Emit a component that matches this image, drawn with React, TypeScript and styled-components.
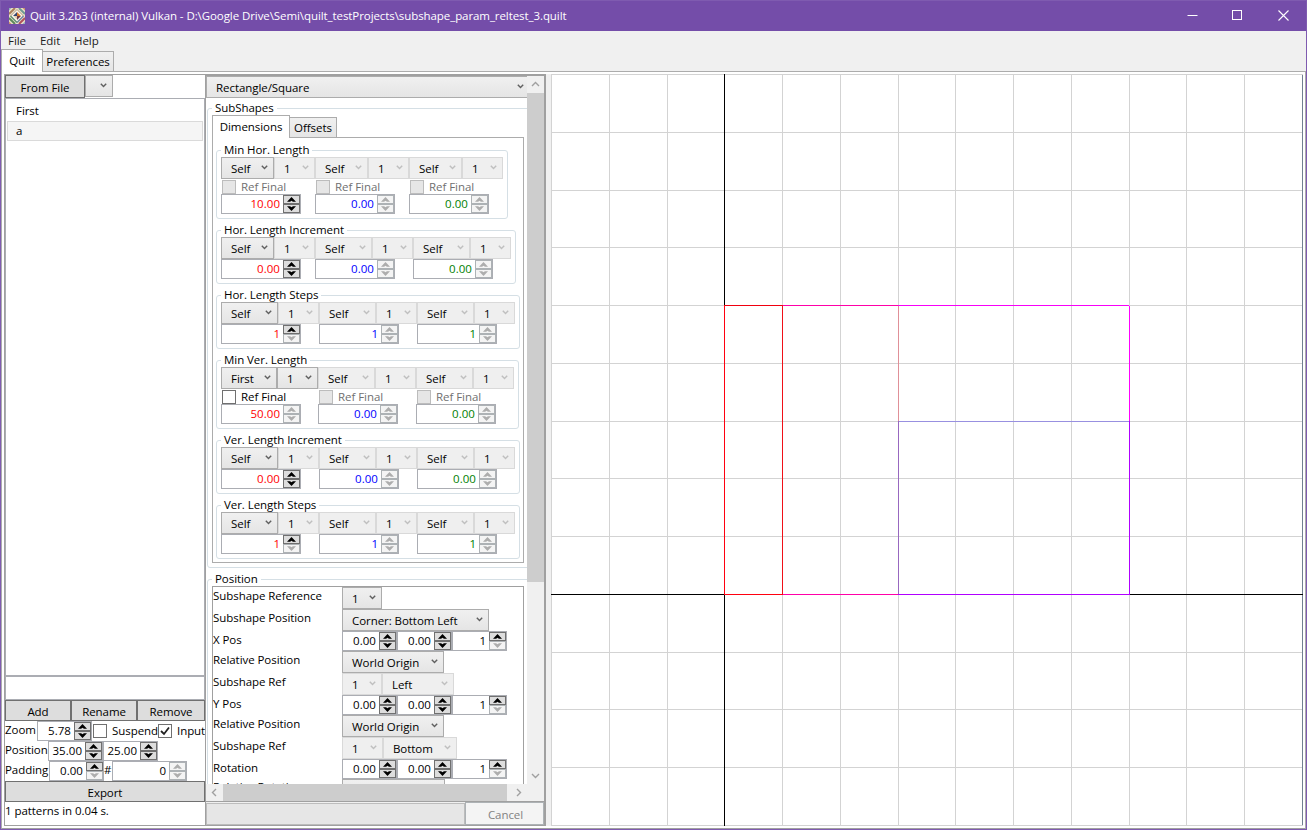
import React from "react";
import styled, { createGlobalStyle, css } from "styled-components";

const Global = createGlobalStyle`
  * { box-sizing: border-box; }
  html, body { margin: 0; padding: 0; overflow: hidden; }
  body { font: 11.5px/16px "Open Sans", "Noto Sans", sans-serif; letter-spacing: -0.06px; color: #000; }
`;

const Window = styled.div`
  width: 1307px; height: 830px; display: flex; flex-direction: column;
  background: #f0f0f0; border: 1px solid #7f5bb0; overflow: hidden; white-space: nowrap;
`;
const TitleBar = styled.header`
  height: 30px; flex: none; background: #744da9; color: #fff; display: flex; align-items: center; padding-left: 8px;
`;
const Title = styled.span` margin-left: 5px; flex: 1; letter-spacing: -0.08px; `;
const WindowButton = styled.span`
  width: 45.5px; height: 30px; display: flex; align-items: center; justify-content: center; position: relative; top: -1px;
`;
const MenuBar = styled.nav` height: 18px; flex: none; display: flex; padding: 2px 0 0 7px; color: #212121; `;
const MenuItem = styled.span<{ $w: number }>` width: ${p => p.$w}px; `;

const TabStrip = styled.div` display: flex; align-items: flex-end; height: 23px; flex: none; `;
const Tab = styled.div<{ $w: number; $active?: boolean }>`
  width: ${p => p.$w}px; border: 1px solid #acacac; border-bottom: 0; flex: none;
  display: flex; justify-content: center; align-items: center; position: relative;
  ${p => p.$active
    ? css`height: 23px; background: #fff; padding-bottom: 1px; z-index: 1;`
    : css`height: 20px; background: linear-gradient(#f0f0f0, #e5e5e5); margin: 0 0 1px -1px;`}
`;
const Page = styled.main`
  flex: 1; min-height: 0; margin-top: -1px; border: 1px solid #acacac; border-bottom-color: #a0a0a0; background: #fff;
  display: flex; padding: 2px;
`;

const LeftColumn = styled.aside`
  width: 201px; flex: none; display: flex; flex-direction: column;
  border: 1px solid #a0a0a0; border-right: 0;
`;
const Row = styled.div<{ $h?: number }>` display: flex; flex: none; ${p => p.$h && css`height: ${p.$h}px;`} `;
const Button = styled.div<{ $w?: number; $h?: number; $disabled?: boolean }>`
  ${p => (p.$w ? css`width: ${p.$w}px; flex: none;` : css`flex: 1;`)}
  height: ${p => p.$h ?? 21}px; background: #ddd; border: 1px solid #707070; padding-top: 2px;
  display: flex; align-items: center; justify-content: center;
  ${p => p.$disabled && css`background: #f4f4f4; border-color: #adb2b5; color: #838383; padding-left: 2px;`}
`;
const ListBox = styled.div` height: 578px; flex: none; border: 1px solid #abadb3; padding: 2px 1px; `;
const ListItem = styled.div<{ $selected?: boolean }>`
  height: 20px; padding: 0 8px; line-height: 18px; border: 1px solid transparent;
  ${p => p.$selected && css`background: #f5f5f5; border-color: #dadada;`}
`;
const NameBox = styled.div` height: 24px; flex: none; border: 1px solid #abadb3; `;
const Label = styled.span<{ $w: number; $tight?: boolean }>`
  width: ${p => p.$w}px; flex: none; line-height: ${p => (p.$tight ? 16 : 18)}px;
`;
const Status = styled.div` padding-top: 1px; `;

const ComboBox = styled.div<{ $w: number; $disabled?: boolean }>`
  width: ${p => p.$w}px; height: 22px; flex: none; display: flex; justify-content: space-between;
  border: 1px solid #acacac; background: linear-gradient(#f0f0f0, #e5e5e5); padding: 3px 5px 0 9px; line-height: 15px;
  ${p => p.$disabled && css`border-color: #d9d9d9; background: #efefef;`}
`;
const Chevron = styled.svg` width: 7px; height: 5px; margin-top: 4px; flex: none; margin-left: auto; `;

function Combo({ text, w, off }: { text?: string; w: number; off?: boolean }) {
  return (
    <ComboBox $w={w} $disabled={off}>
      <span>{text}</span>
      <Chevron viewBox="0 0 7 5">
        <path d="M0.8 0.8L3.5 3.6L6.2 0.8" fill="none" stroke={off ? "#bfbfbf" : "#606060"} strokeWidth="1.4" />
      </Chevron>
    </ComboBox>
  );
}

const SpinField = styled.div<{ $w: number; $color?: string }>`
  width: ${p => p.$w}px; height: 20px; flex: none; border: 1px solid #abadb3; background: #fff;
  display: flex; color: ${p => p.$color ?? "#000"};
  & > span { flex: 1; text-align: right; padding-right: 3px; line-height: 18px; letter-spacing: 0.04px; }
`;
const SpinButtons = styled.div` width: 17px; flex: none; `;
const SpinButton = styled.div<{ $off?: boolean }>`
  height: 9px; display: flex; align-items: center; justify-content: center;
  background: ${p => (p.$off ? "#f4f4f4" : "#ddd")}; border: 1px solid ${p => (p.$off ? "#adb2b5" : "#707070")};
`;

function Arrow({ down, off }: { down?: boolean; off?: boolean }) {
  return (
    <svg width="9" height="5" viewBox="0 0 9 5">
      <path
        d={down ? "M0 0.2H3.1L4.5 1.2L5.9 0.2H9L4.5 4.9Z" : "M0 4.8H3.1L4.5 3.8L5.9 4.8H9L4.5 0.1Z"}
        fill={off ? "#adadad" : "#000"}
      />
    </svg>
  );
}

function Spin({ value, w, color, up = true, down = true }: { value: string; w: number; color?: string; up?: boolean; down?: boolean }) {
  return (
    <SpinField $w={w} $color={color}>
      <span>{value}</span>
      <SpinButtons>
        <SpinButton $off={!up}><Arrow off={!up} /></SpinButton>
        <SpinButton $off={!down}><Arrow down off={!down} /></SpinButton>
      </SpinButtons>
    </SpinField>
  );
}

const Box = styled.span<{ $off?: boolean }>`
  width: 14px; height: 14px; flex: none; border: 1px solid ${p => (p.$off ? "#bcbcbc" : "#707070")};
  background: ${p => (p.$off ? "#e6e6e6" : "#fff")}; display: flex; align-items: center; justify-content: center;
`;
const CheckLabel = styled.label<{ $off?: boolean; $w?: number; $h?: number }>`
  display: flex; align-items: center; gap: 5px; height: ${p => p.$h ?? 15}px; padding-left: 1px;
  color: ${p => (p.$off ? "#707070" : "#000")}; ${p => p.$w && css`width: ${p.$w}px;`}
`;

const Middle = styled.section`
  width: 341px; flex: none; border: 1px solid #a0a0a0; border-width: 2px 2px 1px 1px; display: flex; flex-direction: column;
  background: #f0f0f0;
`;
const ScrollArea = styled.div` display: flex; height: 708px; flex: none; `;
const Viewport = styled.div` width: 321px; flex: none; overflow: hidden; background: #fff; `;
const ScrollContent = styled.div` width: 330px; padding-right: 6px; `;
const VBar = styled.div` width: 17px; flex: none; display: flex; flex-direction: column; background: #f0f0f0; `;
const HBar = styled.div` height: 17px; flex: none; display: flex; width: 321px; `;
const ArrowCell = styled.div` width: 17px; height: 17px; flex: none; display: flex; align-items: center; justify-content: center; `;
const Thumb = styled.div<{ $len: number; $vertical?: boolean }>`
  background: #cdcdcd; flex: none;
  ${p => (p.$vertical ? css`height: ${p.$len}px;` : css`width: ${p.$len}px; margin-right: 3px;`)}
`;
const Spacer = styled.div` flex: 1; `;
const BottomBar = styled.div` display: flex; border-top: 1px solid #a0a0a0; flex: 1; `;
const Progress = styled.div` width: 259px; border: 1px solid #bcbcbc; background: #e6e6e6; margin-top: 1px; `;

function ScrollArrow({ d }: { d: string }) {
  return <svg width="9" height="9" viewBox="0 0 9 9"><path d={d} fill="none" stroke="#a0a0a0" strokeWidth="1.4" /></svg>;
}

const Group = styled.div<{ $w?: number; $h?: number; $mt?: number }>`
  border: 1px solid #d5dfe5; border-radius: 3px; padding: 0 4px;
  margin: ${p => p.$mt ?? 0}px 0 11px; flex: none;
  ${p => p.$w && css`width: ${p.$w}px;`} ${p => p.$h && css`height: ${p.$h}px;`}
`;
const Legend = styled.div`
  width: fit-content; height: 14px; margin-top: -8px; padding: 0 3px; background: #fff; line-height: 13px;
`;
const TabPage = styled.div` width: 312px; height: 426px; border: 1px solid #acacac; margin-top: -1px; padding: 12px 0 0 3px; `;

type ColumnDef = [number, number];
type LengthGroup = { title: string; w: number; cols: ColumnDef[]; values: string[]; first?: string; check?: boolean; linked?: boolean };
const wide: ColumnDef[] = [[57, 41], [57, 41], [57, 41]];
const groups: LengthGroup[] = [
  { title: "Min Hor. Length", w: 292, cols: [[53, 41], [53, 41], [53, 41]], values: ["10.00", "0.00", "0.00"], check: true },
  { title: "Hor. Length Increment", w: 300, cols: [[53, 41], [57, 41], [57, 41]], values: ["0.00", "0.00", "0.00"] },
  { title: "Hor. Length Steps", w: 304, cols: wide, values: ["1", "1", "1"] },
  { title: "Min Ver. Length", w: 303, cols: [[56, 41], [57, 41], [57, 41]], values: ["50.00", "0.00", "0.00"], first: "First", check: true, linked: true },
  { title: "Ver. Length Increment", w: 304, cols: wide, values: ["0.00", "0.00", "0.00"] },
  { title: "Ver. Length Steps", w: 304, cols: wide, values: ["1", "1", "1"] },
];
const valueColors = ["#ff0000", "#0000ff", "#008000"];

function LengthBox({ g }: { g: LengthGroup }) {
  return (
    <Group $w={g.w} $h={g.check ? 69 : 54}>
      <Legend>{g.title}</Legend>
      <Row>
        {g.cols.map(([a, b], i) => {
          const active = i === 0;
          const linked = active && g.linked;
          const spinning = active && !g.linked;
          return (
            <div key={i}>
              <Row>
                <Combo w={a} text={active && g.first ? g.first : "Self"} off={!active} />
                <Combo w={b} text="1" off={!linked} />
              </Row>
              {g.check && (
                <CheckLabel $off={!linked}>
                  <Box $off={!linked} />Ref Final
                </CheckLabel>
              )}
              <Spin w={80} value={g.values[i]} color={valueColors[i]} up={spinning} down={spinning && g.values[i].includes(".")} />
            </div>
          );
        })}
      </Row>
    </Group>
  );
}

const OuterGroup = styled(Group)` width: 324px; margin-left: 1px; `;
const PositionBox = styled.div` width: 312px; border: 1px solid #a0a0a0; height: 260px; `;
const PositionRow = styled.div<{ $h: number }>` display: flex; height: ${p => p.$h}px; `;

function PosRow({ label, spin, tight, children }: { label: string; spin?: boolean; tight?: boolean; children?: React.ReactNode }) {
  return (
    <PositionRow $h={spin ? 20 : 22}>
      <Label $w={129} $tight={tight}>{label}</Label>
      {spin ? (
        <>
          <Spin w={55} value="0.00" />
          <Spin w={55} value="0.00" />
          <Spin w={55} value="1" down={false} />
        </>
      ) : children}
    </PositionRow>
  );
}

function SubShapes() {
  return (
    <OuterGroup $mt={10} $h={460}>
      <Legend>SubShapes</Legend>
      <TabStrip>
        <Tab $w={78} $active>Dimensions</Tab>
        <Tab $w={48}>Offsets</Tab>
      </TabStrip>
      <TabPage>
        {groups.map(g => <LengthBox key={g.title} g={g} />)}
      </TabPage>
    </OuterGroup>
  );
}

function Position() {
  return (
    <OuterGroup>
      <Legend>Position</Legend>
      <PositionBox>
        <PosRow label="Subshape Reference"><Combo w={40} text="1" /></PosRow>
        <PosRow label="Subshape Position"><Combo w={147} text="Corner: Bottom Left" /></PosRow>
        <PosRow label="X Pos" spin />
        <PosRow label="Relative Position"><Combo w={102} text="World Origin" /></PosRow>
        <PosRow label="Subshape Ref"><Combo w={40} text="1" off /><Combo w={72} text="Left" off /></PosRow>
        <PosRow label="Y Pos" spin />
        <PosRow label="Relative Position"><Combo w={102} text="World Origin" /></PosRow>
        <PosRow label="Subshape Ref"><Combo w={41} text="1" off /><Combo w={74} text="Bottom" off /></PosRow>
        <PosRow label="Rotation" spin />
        <PosRow label="Relative Rotation" tight><Combo w={103} /></PosRow>
      </PositionBox>
    </OuterGroup>
  );
}

const Splitter = styled.div` width: 5px; flex: none; background: #f0f0f0; `;
const Canvas = styled.svg` width: 752px; height: 752px; flex: none; display: block; `;

const gridX = [0, 58, 116, 173, 231, 289, 347, 404, 462, 520, 578, 635, 693];
const gridY = [0, 58, 116, 173, 231, 289, 347, 404, 462, 520, 578, 635, 693, 751];
const segments: [number, number, number, number, string][] = [
  [0, 520, 752, 1, "#000"],
  [173, 0, 1, 752, "#000"],
  [173, 231, 58, 1, "#f00010"],
  [231, 231, 116, 1, "#ff00a8"],
  [347, 231, 231, 1, "#f800f8"],
  [231, 231, 1, 290, "#f01018"],
  [347, 232, 1, 115, "#e09098"],
  [347, 347, 231, 1, "#9890e0"],
  [347, 347, 1, 173, "#9868c0"],
  [578, 232, 1, 115, "#ff00ff"],
  [578, 347, 1, 173, "#b000ff"],
  [173, 520, 59, 1, "#ff0010"],
  [232, 520, 115, 1, "#ff00a8"],
  [347, 520, 232, 1, "#b000ff"],
  [173, 231, 1, 289, "#ff0010"],
];

function Drawing() {
  return (
    <Canvas viewBox="0 0 752 752" shapeRendering="crispEdges">
      {gridX.map(x => <rect key={"x" + x} x={x} y={0} width={1} height={752} fill="#d3d3d3" />)}
      {gridY.map(y => <rect key={"y" + y} x={0} y={y} width={752} height={1} fill="#d3d3d3" />)}
      <rect x={751} y={1} width={1} height={750} fill="#708090" />
      {segments.map(([x, y, w, h, c], i) => <rect key={i} x={x} y={y} width={w} height={h} fill={c} />)}
    </Canvas>
  );
}

function Logo() {
  return (
    <svg width="16" height="16" viewBox="0 0 16 16">
      <rect width="16" height="16" fill="#e9dfcb" />
      <path d="M0 6L6 0" stroke="#a9805a" strokeWidth="2" />
      <path d="M10 0L16 6" stroke="#6f9a92" strokeWidth="2" />
      <path d="M0 10L6 16" stroke="#5d8a5c" strokeWidth="2" />
      <path d="M10 16L16 10" stroke="#b0525a" strokeWidth="2" />
      <path d="M0 0H2.5L0 2.5ZM16 16H13.5L16 13.5Z" fill="#8fb0b8" />
      <path d="M16 0V2.5L13.5 0ZM0 16V13.5L2.5 16Z" fill="#c98f6a" />
      <path d="M8 2L14 8L8 14L2 8Z" fill="#fbf6ee" />
      <path d="M1.5 8L8 14.5" stroke="#5f9070" strokeWidth="1.4" />
      <path d="M14.5 8L8 14.5" stroke="#6e83a2" strokeWidth="1.4" />
      <path d="M1.5 8L8 1.5L14.5 8" fill="none" stroke="#b7a083" strokeWidth="1" />
      <path d="M8 4L12 8H8Z" fill="#d97a2b" />
      <path d="M8 4V8H4Z" fill="#38466d" />
      <path d="M4.5 8H8V11.5Z" fill="#e0cdb0" />
      <path d="M8 8H12L8 12Z" fill="#713b48" />
    </svg>
  );
}

export default function App() {
  return (
    <Window>
      <Global />
      <TitleBar>
        <Logo />
        <Title>Quilt 3.2b3 (internal) Vulkan - D:\Google Drive\Semi\quilt_testProjects\subshape_param_reltest_3.quilt</Title>
        <WindowButton><svg width="11" height="11"><path d="M0.5 5.5H10.5" stroke="#fff" /></svg></WindowButton>
        <WindowButton><svg width="11" height="11"><rect x="0.5" y="0.5" width="9" height="9" fill="none" stroke="#fff" /></svg></WindowButton>
        <WindowButton><svg width="11" height="11"><path d="M0.5 0.5L10.5 10.5M10.5 0.5L0.5 10.5" stroke="#fff" strokeWidth="1.1" /></svg></WindowButton>
      </TitleBar>
      <MenuBar>
        <MenuItem $w={32}>File</MenuItem><MenuItem $w={34}>Edit</MenuItem><MenuItem $w={30}>Help</MenuItem>
      </MenuBar>
      <TabStrip>
        <Tab $w={42} $active>Quilt</Tab>
        <Tab $w={72}>Preferences</Tab>
      </TabStrip>
      <Page>
        <LeftColumn>
          <Row $h={23}>
            <Button $w={80} $h={23}>From File</Button>
            <Combo w={28} />
          </Row>
          <ListBox>
            <ListItem>First</ListItem>
            <ListItem $selected>a</ListItem>
          </ListBox>
          <NameBox />
          <Row>
            <Button $w={66}>Add</Button><Button $w={66}>Rename</Button><Button>Remove</Button>
          </Row>
          <Row $h={20}>
            <Label $w={32}>Zoom</Label><Spin w={55} value="5.78" />
            <CheckLabel $h={20} $w={65}><Box />Suspend</CheckLabel>
            <CheckLabel $h={20}>
              <Box><svg width="10" height="10" viewBox="0 0 10 10"><path d="M1 5L4 8L9 1.5" fill="none" stroke="#212121" strokeWidth="1.8" /></svg></Box>Input
            </CheckLabel>
          </Row>
          <Row $h={20}>
            <Label $w={43}>Position</Label><Spin w={55} value="35.00" /><Spin w={55} value="25.00" />
          </Row>
          <Row $h={20}>
            <Label $w={44}>Padding</Label><Spin w={55} value="0.00" down={false} />
            <Label $w={8}>#</Label><Spin w={75} value="0" up={false} down={false} />
          </Row>
          <Row><Button>Export</Button></Row>
          <Status>1 patterns in 0.04 s.</Status>
        </LeftColumn>
        <Middle>
          <ScrollArea>
            <Viewport>
              <ScrollContent>
                <Combo w={324} text="Rectangle/Square" />
                <SubShapes />
                <Position />
              </ScrollContent>
            </Viewport>
            <VBar>
              <ArrowCell><ScrollArrow d="M1 6L4.5 2.5L8 6" /></ArrowCell>
              <Thumb $vertical $len={489} />
              <Spacer />
              <ArrowCell><ScrollArrow d="M1 3L4.5 6.5L8 3" /></ArrowCell>
            </VBar>
          </ScrollArea>
          <HBar>
            <ArrowCell><ScrollArrow d="M6 1L2.5 4.5L6 8" /></ArrowCell>
            <Thumb $len={284} />
            <ArrowCell><ScrollArrow d="M3 1L6.5 4.5L3 8" /></ArrowCell>
          </HBar>
          <BottomBar>
            <Progress />
            <Button $disabled $h={23}>Cancel</Button>
          </BottomBar>
        </Middle>
        <Splitter />
        <Drawing />
      </Page>
    </Window>
  );
}
